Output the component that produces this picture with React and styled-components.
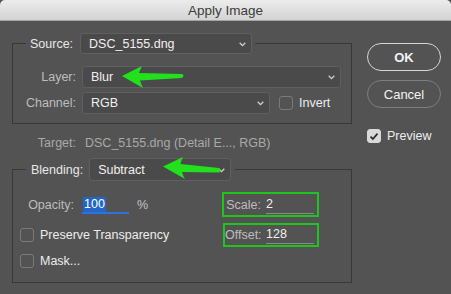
import React from "react";
import styled, { createGlobalStyle } from "styled-components";

const GlobalStyle = createGlobalStyle`
  html, body {
    margin: 0;
    background: #535353;
  }
  * { box-sizing: border-box; }
`;

const Window = styled.div`
  position: relative;
  width: 451px;
  height: 294px;
  overflow: hidden;
  background: #535353;
  font-family: "Liberation Sans", Arial, sans-serif;
  font-size: 12.5px;
  color: #ececec;
`;

const TitleBar = styled.div`
  height: 21px;
  display: flex;
  align-items: center;
  justify-content: center;
  background: linear-gradient(#ececec, #d3d3d3);
  border-bottom: 1px solid #a4a4a4;
  color: #3b3b3b;
  font-size: 13.5px;
  border-radius: 5px 5px 0 0;
`;

const Body = styled.div`
  display: flex;
  padding: 12px 0 0 12px;
`;

const Main = styled.div`
  width: 340px;
  display: flex;
  flex-direction: column;
`;

const Side = styled.div`
  margin-left: 15px;
  padding-top: 10px;
  width: 74px;
  display: flex;
  flex-direction: column;
`;

const Group = styled.fieldset`
  margin: 0;
  padding: 0;
  min-width: 0;
  border: 1px solid #383838;
  margin-top: ${(p) => p.$top || 0}px;
`;

const Legend = styled.legend`
  margin-left: 13px;
  padding: 0 ${(p) => p.$right}px 0 ${(p) => p.$left}px;
  display: flex;
  align-items: center;
  gap: ${(p) => p.$gap}px;
`;

const GroupLabel = styled.span`
  color: #e8e8e8;
`;

const Label = styled.span`
  color: ${(p) => p.$dim ? "#a9a9a9" : "#bdbdbd"};
  text-align: right;
  white-space: nowrap;
`;

const SelectBox = styled.div`
  position: relative;
  width: ${(p) => p.$w}px;
  height: ${(p) => p.$h || 22}px;
  display: flex;
  align-items: center;
  padding-left: 8px;
  background: #4a4a4a;
  border: 1px solid #5f5f5f;
  border-radius: 3px;
  color: #f0f0f0;
`;

const Chevron = styled.svg`
  position: absolute;
  right: 5px;
  top: 50%;
  margin-top: -2px;
`;

const Select = ({ w, h, children }) => (
  <SelectBox $w={w} $h={h}>
    {children}
    <Chevron width="7" height="5" viewBox="0 0 7 5">
      <path d="M0.7 0.8 L3.5 3.6 L6.3 0.8" fill="none" stroke="#d0d0d0" strokeWidth="1.3" />
    </Chevron>
  </SelectBox>
);

const LayerGrid = styled.div`
  display: grid;
  grid-template-columns: 63px auto;
  grid-auto-rows: 22px;
  column-gap: 6px;
  row-gap: 4px;
  align-items: center;
  padding: 12px 0 9px;
`;

const Inline = styled.div`
  display: flex;
  align-items: center;
`;

const Box = styled.span`
  width: 14px;
  height: 14px;
  border-radius: 3px;
  flex: none;
  display: flex;
  align-items: center;
  justify-content: center;
  border: 1px solid ${(p) => (p.$on ? "#d9d9d9" : "#7a7a7a")};
  background: ${(p) => (p.$on ? "#d9d9d9" : "transparent")};
  margin-left: ${(p) => p.$ml || 0}px;
`;

const CheckText = styled.span`
  margin-left: 6px;
  color: #ededed;
`;

const Checkbox = ({ on, ml, children }) => (
  <Inline>
    <Box $on={on} $ml={ml}>
      {on && (
        <svg width="10" height="9" viewBox="0 0 10 9">
          <path d="M1.5 4.6 L3.9 7 L8.5 1.6" fill="none" stroke="#2e2e2e" strokeWidth="1.8" />
        </svg>
      )}
    </Box>
    <CheckText>{children}</CheckText>
  </Inline>
);

const TargetRow = styled.div`
  display: grid;
  grid-template-columns: 64px auto;
  column-gap: 9px;
  height: 16px;
  line-height: 16px;
  margin-top: 11px;
  color: #a9a9a9;
`;

const BlendGrid = styled.div`
  display: grid;
  grid-template-columns: 209px 97px;
  grid-template-rows: 25px 24px 16px;
  row-gap: 6px;
  align-items: center;
  padding: 11px 0 13px;
`;

const OpacityRow = styled.div`
  display: grid;
  grid-template-columns: 61px 47px auto;
  column-gap: 8px;
  align-items: center;
`;

const OpacityInput = styled.div`
  height: 19px;
  border-bottom: 2px solid #2a73e0;
  display: flex;
  align-items: flex-end;
  padding-left: 1px;
`;

const Selected = styled.span`
  background: #2466c6;
  color: #ffffff;
  line-height: 15px;
  padding: 0 1px;
`;

const Percent = styled.span`
  color: #c4c4c4;
`;

const FieldBox = styled.div`
  height: ${(p) => p.$h}px;
  margin-left: ${(p) => p.$ml || 0}px;
  border: 2px solid #1fc41f;
  display: grid;
  grid-template-columns: ${(p) => 37 - (p.$ml || 0)}px 48px;
  column-gap: 5px;
  align-items: center;
`;

const FieldValue = styled.div`
  height: 18px;
  line-height: 16px;
  border-bottom: 1px solid #8a8a8a;
  color: #f0f0f0;
`;

const Button = styled.button`
  height: 28px;
  width: 74px;
  margin-bottom: 9px;
  border-radius: 14px;
  background: transparent;
  border: ${(p) => (p.$primary ? "1.5px solid #d6d6d6" : "1px solid #7e7e7e")};
  color: #f2f2f2;
  font-family: inherit;
  font-size: 13px;
  font-weight: ${(p) => (p.$primary ? 700 : 400)};
  padding: 0;
`;

const PreviewRow = styled.div`
  margin-top: 12px;
`;

const Annotation = styled.svg`
  position: absolute;
  left: 0;
  top: 0;
  pointer-events: none;
`;

export default function App() {
  return (
    <>
      <GlobalStyle />
      <Window>
        <TitleBar>Apply Image</TitleBar>
        <Body>
          <Main>
            <Group>
              <Legend $left={4} $right={3} $gap={7}>
                <GroupLabel>Source:</GroupLabel>
                <Select w={172} h={21}>DSC_5155.dng</Select>
              </Legend>
              <LayerGrid>
                <Label>Layer:</Label>
                <Select w={259}>Blur</Select>
                <Label>Channel:</Label>
                <Inline>
                  <Select w={188}>RGB</Select>
                  <Checkbox ml={9}>Invert</Checkbox>
                </Inline>
              </LayerGrid>
            </Group>

            <TargetRow>
              <Label $dim>Target:</Label>
              <span>DSC_5155.dng (Detail E..., RGB)</span>
            </TargetRow>

            <Group $top={7}>
              <Legend $left={5} $right={4} $gap={6}>
                <GroupLabel>Blending:</GroupLabel>
                <Select w={142} h={23}>Subtract</Select>
              </Legend>
              <BlendGrid>
                <OpacityRow>
                  <Label>Opacity:</Label>
                  <OpacityInput>
                    <Selected>100</Selected>
                  </OpacityInput>
                  <Percent>%</Percent>
                </OpacityRow>
                <FieldBox $h={25}>
                  <Label>Scale:</Label>
                  <FieldValue>2</FieldValue>
                </FieldBox>
                <Checkbox ml={7}>Preserve Transparency</Checkbox>
                <FieldBox $h={24} $ml={1}>
                  <Label>Offset:</Label>
                  <FieldValue>128</FieldValue>
                </FieldBox>
                <Checkbox ml={7}>Mask...</Checkbox>
              </BlendGrid>
            </Group>
          </Main>

          <Side>
            <Button $primary>OK</Button>
            <Button>Cancel</Button>
            <PreviewRow>
              <Checkbox on>Preview</Checkbox>
            </PreviewRow>
          </Side>
        </Body>

        <Annotation width="451" height="294" viewBox="0 0 451 294">
          <path
            d="M122 76 L142 66 Q140 70 139 73 L182 74 Q185 75.5 182 78 L140 80.5 Q141 84 143 88 Z"
            fill="#22e01c"
          />
          <path
            d="M163 166.5 L183 157 Q181 161 180.5 164 L219 168 Q222 170.5 219 172.5 L182 172 Q183 176 185 179 Z"
            fill="#22e01c"
          />
        </Annotation>
      </Window>
    </>
  );
}
